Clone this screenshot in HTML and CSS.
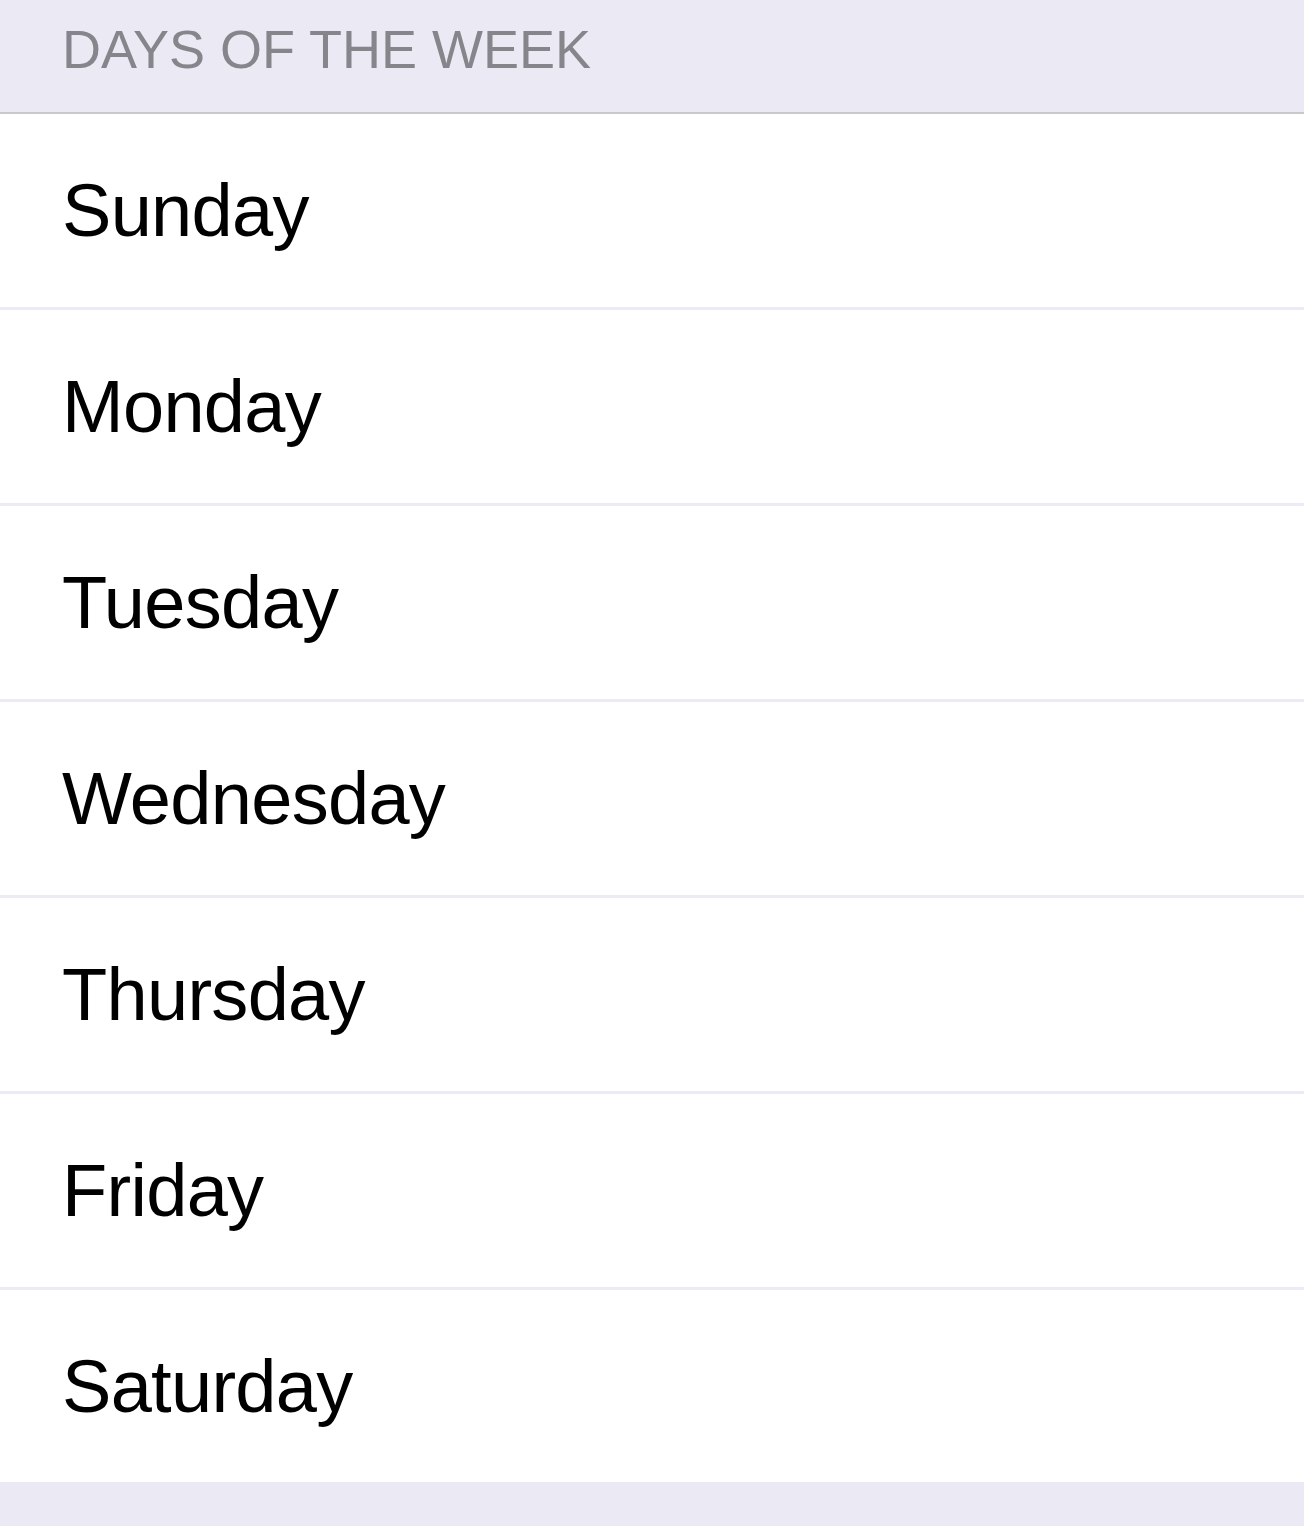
FILE: index.html
```html
<!DOCTYPE html>
<html lang="en">
<head>
  <meta charset="UTF-8">
  <meta name="viewport" content="width=device-width, initial-scale=1.0">
  <title>Days of the Week</title>
  <link rel="stylesheet" href="styles.css">
</head>
<body>
  <!-- Section header -->
  <div class="section-header">DAYS OF THE WEEK</div>

  <!-- Day list -->
  <ul class="day-list">
    <li class="day-row">Sunday</li>
    <li class="day-row">Monday</li>
    <li class="day-row">Tuesday</li>
    <li class="day-row">Wednesday</li>
    <li class="day-row">Thursday</li>
    <li class="day-row">Friday</li>
    <li class="day-row">Saturday</li>
  </ul>
</body>
</html>
```

FILE: styles.css
```css
/* Colours */
:root {
  --group-bg: #ebe9f3;
  --header-text: #86858c;
  --header-border: #c9c8cd;
  --row-bg: #ffffff;
  --row-text: #000000;
  --separator: #ecebf3;
}

body {
  margin: 0;
  background-color: var(--group-bg);
  font-family: "Liberation Sans", Arial, sans-serif;
}

/* Section Header */
.section-header {
  height: 114px;
  box-sizing: border-box;
  padding: 19px 0 0 62px;
  border-bottom: 2px solid var(--header-border);
  color: var(--header-text);
  font-size: 54px;
  line-height: 60px;
}

/* Day Rows */
.day-list {
  list-style: none;
  margin: 0;
  padding: 0;
  background-color: var(--row-bg);
}

.day-row {
  display: flex;
  align-items: center;
  height: 193px;
  padding-left: 62px;
  border-top: 3px solid var(--separator);
  color: var(--row-text);
  font-size: 74px;
  letter-spacing: -0.7px;
}

.day-row:first-child {
  border-top: none;
}

.day-row:last-child {
  height: 192px;
}
```
